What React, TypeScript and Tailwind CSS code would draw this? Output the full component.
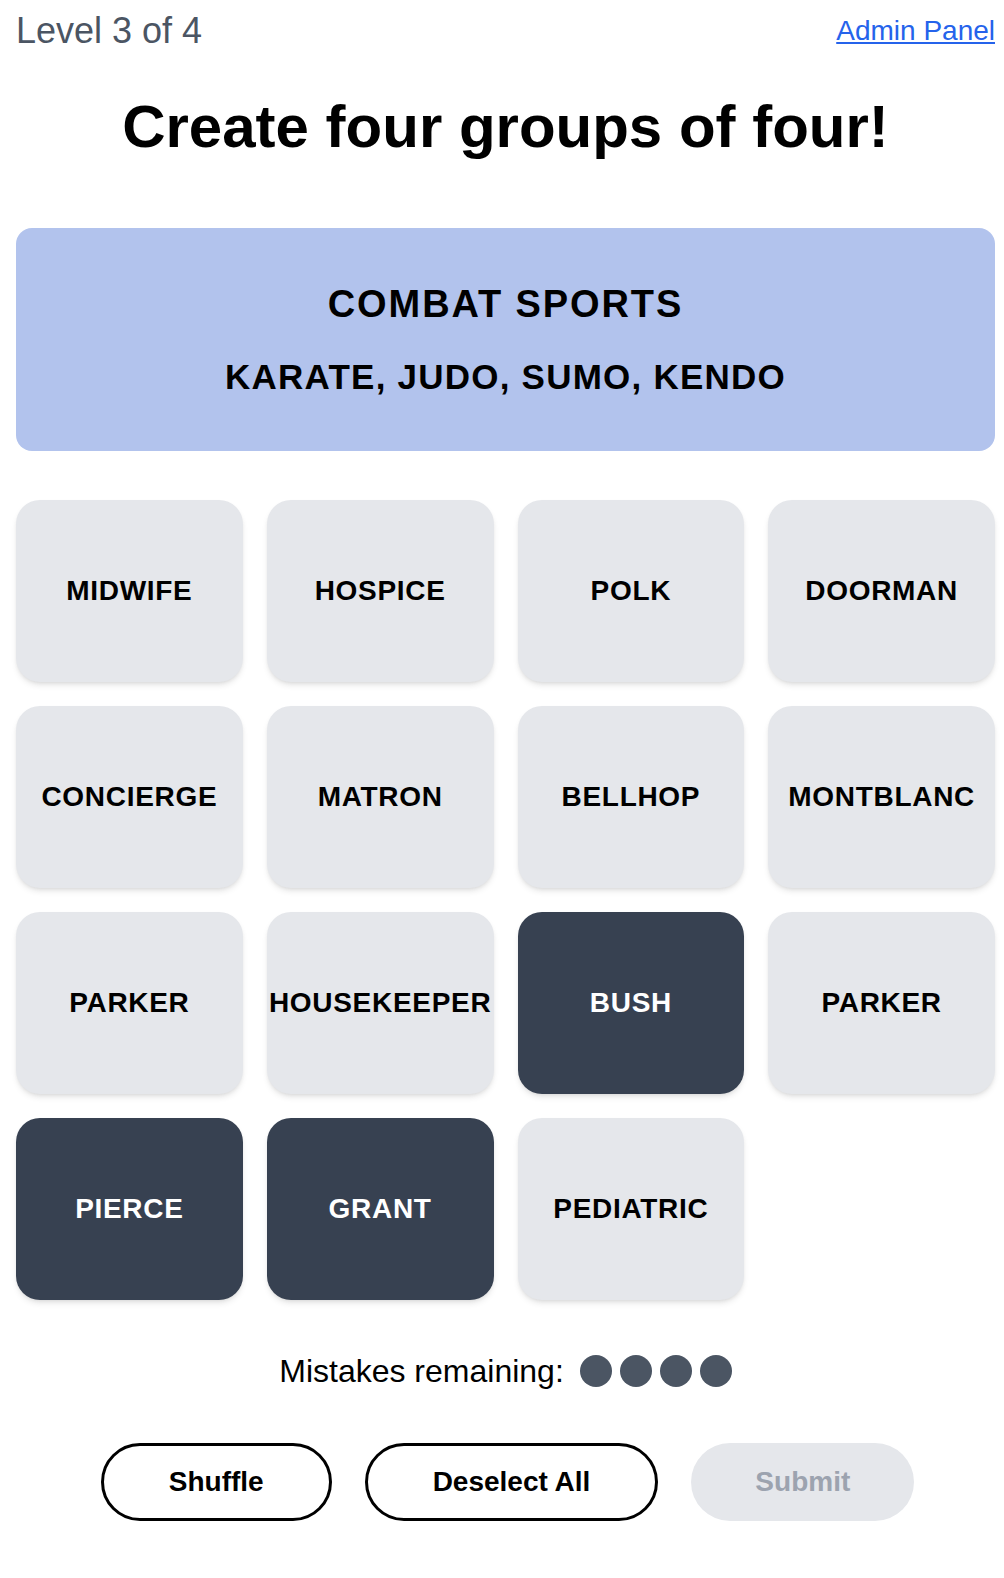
import React from "react";

const words: { w: string; sel?: boolean }[] = [
  { w: "MIDWIFE" },
  { w: "HOSPICE" },
  { w: "POLK" },
  { w: "DOORMAN" },
  { w: "CONCIERGE" },
  { w: "MATRON" },
  { w: "BELLHOP" },
  { w: "MONTBLANC" },
  { w: "PARKER" },
  { w: "HOUSEKEEPER" },
  { w: "BUSH", sel: true },
  { w: "PARKER" },
  { w: "PIERCE", sel: true },
  { w: "GRANT", sel: true },
  { w: "PEDIATRIC" },
];

export default function App() {
  return (
    <div
      className="min-h-screen w-full bg-white pl-4 pr-[9px] pb-10 text-black"
      style={{ fontFamily: '"Liberation Sans", Arial, sans-serif' }}
    >
      <div className="flex items-center justify-between pt-[11px]">
        <span className="text-[36px] leading-[40px] text-[#4b5563]">Level 3 of 4</span>
        <a href="#" className="text-[28px] leading-[32px] text-[#2563eb] underline">
          Admin Panel
        </a>
      </div>

      <h1 className="mt-[46px] text-center text-[60px] leading-[60px] font-bold">
        Create four groups of four!
      </h1>

      <div className="mt-[71px] flex flex-col items-center gap-[33px] rounded-2xl bg-[#b2c3ed] py-[55px]">
        <div className="text-[38px] leading-[42px] font-bold tracking-[0.05em]">COMBAT SPORTS</div>
        <div className="text-[35px] leading-[38px] font-bold tracking-[0.035em]">
          KARATE, JUDO, SUMO, KENDO
        </div>
      </div>

      <div className="mt-[49px] grid grid-cols-4 gap-6">
        {words.map((item, i) => (
          <div
            key={i}
            className={
              item.sel
                ? "flex h-[182px] items-center justify-center whitespace-nowrap rounded-3xl bg-[#374151] text-[28px] font-bold tracking-[0.025em] text-white shadow-md"
                : "flex h-[182px] items-center justify-center whitespace-nowrap rounded-3xl bg-[#e5e7eb] text-[28px] font-bold tracking-[0.025em] text-black shadow-md"
            }
          >
            {item.w}
          </div>
        ))}
      </div>

      <div className="mt-[51px] flex items-center justify-center gap-4">
        <span className="text-[32px] leading-[40px]">Mistakes remaining:</span>
        <div className="flex gap-2">
          <span className="h-8 w-8 rounded-full bg-[#4b5563]" />
          <span className="h-8 w-8 rounded-full bg-[#4b5563]" />
          <span className="h-8 w-8 rounded-full bg-[#4b5563]" />
          <span className="h-8 w-8 rounded-full bg-[#4b5563]" />
        </div>
      </div>

      <div className="mt-[52px] flex justify-center gap-[33px] pl-[4px]">
        <button className="h-[78px] rounded-full border-[3px] border-black bg-white px-[65px] text-[28px] font-bold">
          Shuffle
        </button>
        <button className="h-[78px] rounded-full border-[3px] border-black bg-white px-[65px] text-[28px] font-bold">
          Deselect All
        </button>
        <button className="h-[78px] rounded-full bg-[#e5e7eb] px-[64px] text-[28px] font-bold text-[#9ca3af]">
          Submit
        </button>
      </div>
    </div>
  );
}
